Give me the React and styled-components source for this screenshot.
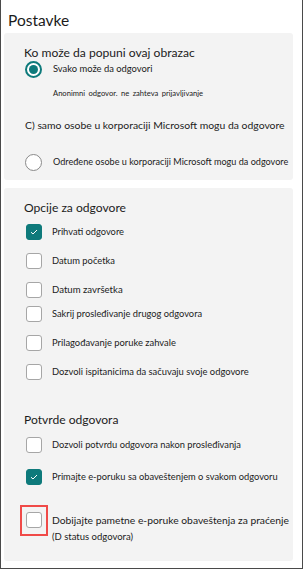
import React from "react";
import styled, { createGlobalStyle, css } from "styled-components";

const Global = createGlobalStyle`
  html, body { margin: 0; padding: 0; background: #fff; }
  body { font-family: Lato, "Liberation Sans", sans-serif; color: #1b1b1b; }
`;

const TEAL = "#0e7a7b";

const Frame = styled.div`
  box-sizing: border-box;
  width: 303px;
  height: 569px;
  border: 1px solid #4a4a4a;
  border-top: none;
  padding: 0 9px 0 3px;
  display: flex;
  flex-direction: column;
`;

const Title = styled.h1`
  margin: 10px 0 3px 4px;
  font-size: 15.5px;
  line-height: 20px;
  font-weight: 400;
  color: #1b1b1b;
`;

const Panel = styled.section`
  background: #f3f3f3;
  border-radius: 3px;
  padding: ${(p) => p.$pad};
  display: flex;
  flex-direction: column;
  margin-bottom: ${(p) => p.$mb || 0}px;
`;

const Heading = styled.h2`
  margin: ${(p) => p.$mt || 0}px 0 0 0;
  font-size: 12.1px;
  line-height: 16px;
  height: 16px;
  font-weight: 400;
  color: #1b1b1b;
  white-space: nowrap;
`;

const Row = styled.div`
  display: flex;
  align-items: center;
  height: ${(p) => p.$h || 16}px;
  margin-top: ${(p) => p.$mt || 0}px;
  white-space: nowrap;
`;

const Label = styled.span`
  font-size: ${(p) => p.$size || 9.3}px;
  line-height: 14px;
  margin-left: ${(p) => p.$ml ?? 10}px;
  color: #1b1b1b;
`;

const Sub = styled.div`
  font-size: ${(p) => p.$size || 7.6}px;
  line-height: 12px;
  height: 12px;
  margin-top: ${(p) => p.$mt || 0}px;
  padding-left: ${(p) => p.$pl || 0}px;
  white-space: nowrap;
  word-spacing: ${(p) => p.$ws || 0}px;
  color: #1b1b1b;
`;

const Radio = styled.span`
  box-sizing: border-box;
  flex: none;
  width: 17px;
  height: 17px;
  margin-left: 1px;
  border-radius: 50%;
  border: 2px solid ${(p) => (p.$on ? TEAL : "#8a8a8a")};
  border-width: ${(p) => (p.$on ? 2 : 1.5)}px;
  background: #fff;
  display: flex;
  align-items: center;
  justify-content: center;
  &::after {
    content: "";
    display: ${(p) => (p.$on ? "block" : "none")};
    width: 9px;
    height: 9px;
    border-radius: 50%;
    background: ${TEAL};
  }
`;

const Box = styled.span`
  position: relative;
  box-sizing: border-box;
  flex: none;
  width: 16px;
  height: 16px;
  margin-left: 2px;
  border-radius: 3px;
  display: flex;
  align-items: center;
  justify-content: center;
  ${(p) =>
    p.$on
      ? css`
          background: ${TEAL};
          border: 1px solid ${TEAL};
        `
      : css`
          background: #fff;
          border: 1.5px solid #a6a6a6;
        `}
  ${(p) =>
    p.$mark &&
    css`
      &::after {
        content: "";
        position: absolute;
        left: -7px;
        top: -8px;
        width: 24px;
        height: 27px;
        border: 2px solid #f04a48;
      }
    `}
`;

const Check = () => (
  <svg width="8" height="6" viewBox="0 0 8 6" fill="none">
    <path d="M1 3.2 L3 5 L7 1" stroke="#fff" strokeWidth="1" />
  </svg>
);

const CheckRow = ({ on, mark, mt, children, size }) => (
  <Row $mt={mt}>
    <Box $on={on} $mark={mark}>{on && <Check />}</Box>
    <Label $size={size}>{children}</Label>
  </Row>
);

export default function App() {
  return (
    <>
      <Global />
      <Frame>
        <Title>Postavke</Title>
        <Panel $pad="12px 0 9px 20px" $mb={8}>
          <Heading>Ko može da popuni ovaj obrazac</Heading>
          <Row $h={16}>
            <Radio $on />
            <Label $ml={11} $size={9.4}>Svako može da odgovori</Label>
          </Row>
          <Sub $mt={10} $pl={29} $ws={1.5}>
            Anonimni odgovor. ne zahteva prijavljivanje
          </Sub>
          <Row $h={14} $mt={19}>
            <Label $ml={1} $size={10.4}>
              C) samo osobe u korporaciji Microsoft mogu da odgovore
            </Label>
          </Row>
          <Row $h={18} $mt={21}>
            <Radio />
            <Label $ml={11} $size={9.1}>Određene osobe u korporaciji Microsoft mogu da odgovore</Label>
          </Row>
        </Panel>
        <Panel $pad="12px 0 18px 20px">
          <Heading>Opcije za odgovore</Heading>
          <CheckRow on mt={8}>Prihvati odgovore</CheckRow>
          <CheckRow mt={13} size={9.4}>Datum početka</CheckRow>
          <CheckRow mt={13} size={9.6}>Datum završetka</CheckRow>
          <CheckRow mt={8}>Sakrij prosleđivanje drugog odgovora</CheckRow>
          <CheckRow mt={13} size={9.4}>Prilagođavanje poruke zahvale</CheckRow>
          <CheckRow mt={13} size={9.4}>Dozvoli ispitanicima da sačuvaju svoje odgovore</CheckRow>
          <Heading $mt={32}>Potvrde odgovora</Heading>
          <CheckRow mt={9}>Dozvoli potvrdu odgovora nakon prosleđivanja</CheckRow>
          <CheckRow on mt={16}>Primajte e-poruku sa obaveštenjem o svakom odgovoru</CheckRow>
          <CheckRow mark mt={27} size={10.3}>
            Dobijajte pametne e-poruke obaveštenja za praćenje
          </CheckRow>
          <Sub $mt={3} $pl={28} $size={9.5}>(D status odgovora)</Sub>
        </Panel>
      </Frame>
    </>
  );
}
